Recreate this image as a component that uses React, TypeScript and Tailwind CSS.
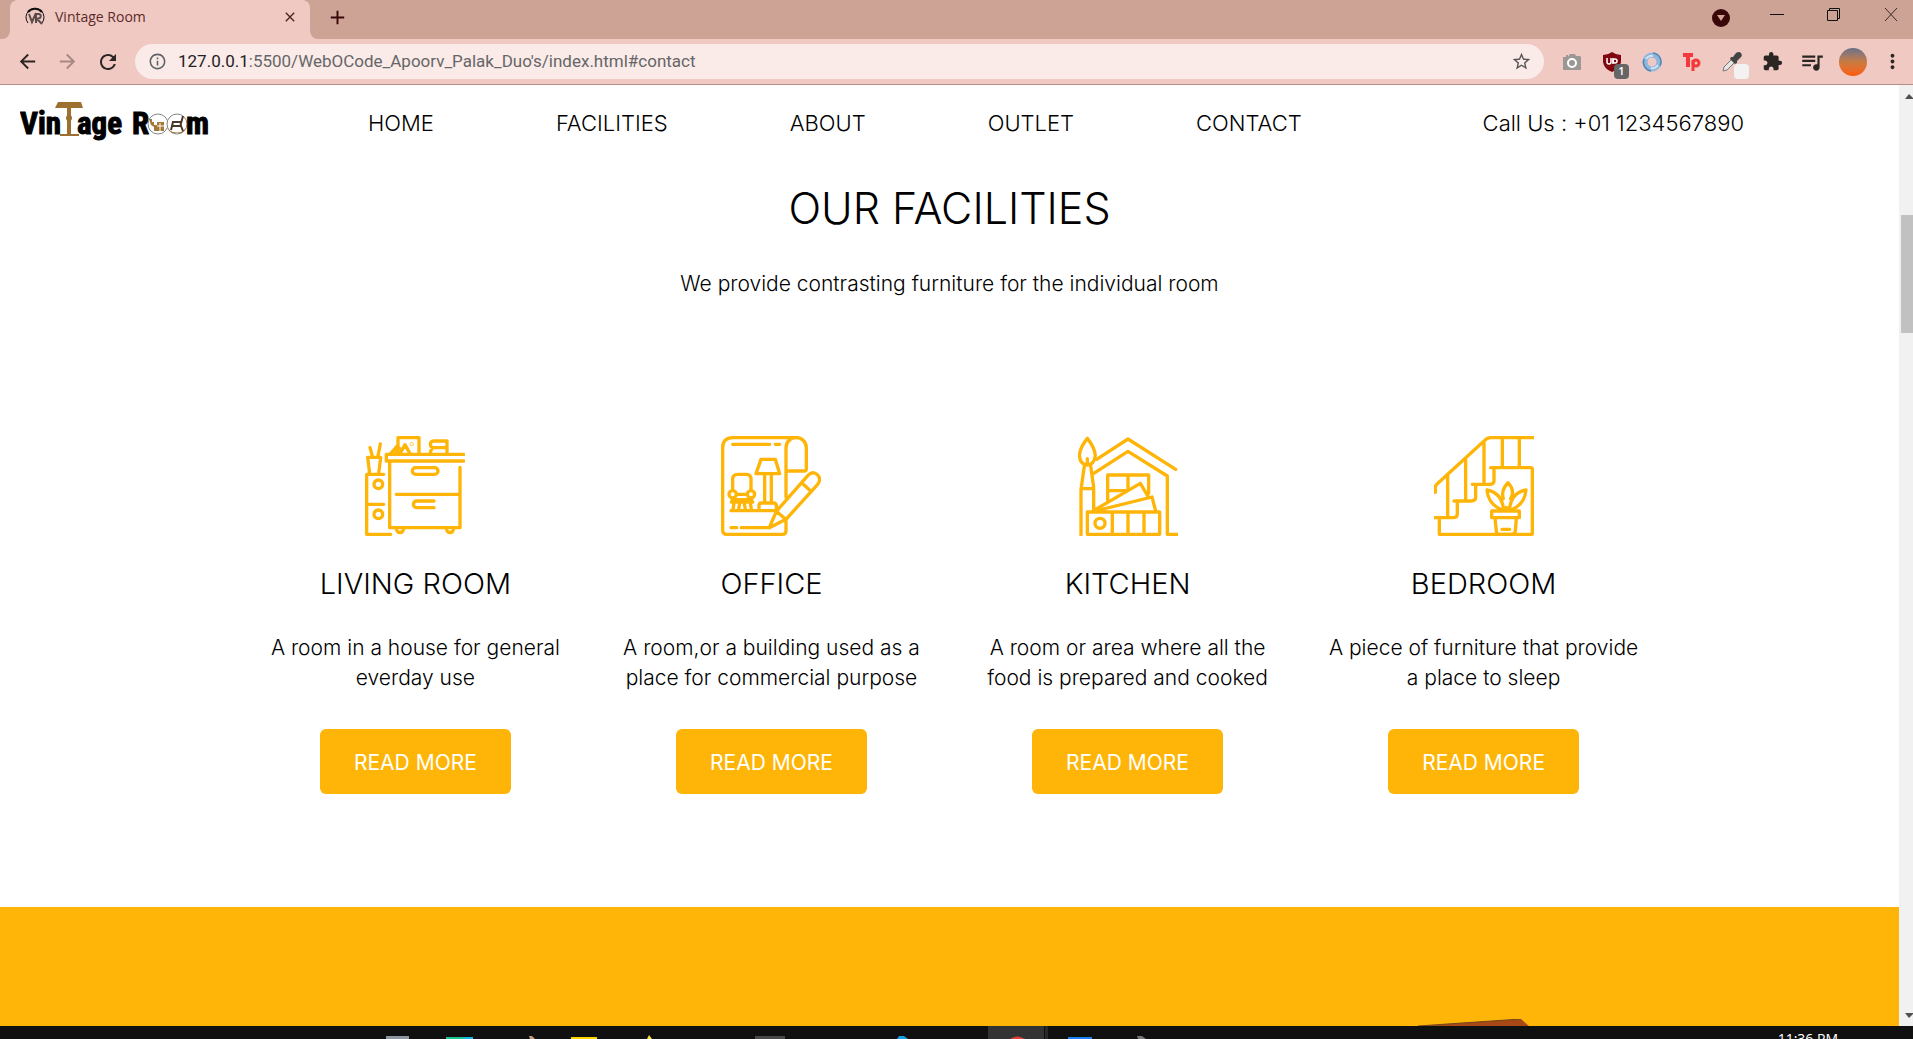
import React from 'react';
import {
  MdArrowBack,
  MdArrowForward,
  MdRefresh,
  MdInfoOutline,
  MdStarBorder,
  MdExtension,
  MdQueueMusic,
  MdMoreVert,
  MdClose,
  MdAdd,
} from 'react-icons/md';

const stroke = {
  fill: 'none',
  stroke: '#ffb508',
  strokeWidth: 10,
  strokeLinecap: 'round' as const,
  strokeLinejoin: 'round' as const,
};

function LivingIcon() {
  return (
    <svg viewBox="45 48 300 300" className="size-[100px]" aria-hidden="true" {...stroke}>
      <path d="M122 343H50V163H101M50 253H101M59 161L53 112H92L86 161M67 108L60 83M84 108L91 72" />
      <circle cx="85" cy="193" r="13" />
      <circle cx="85" cy="283" r="13" />
      <path d="M341 103H109V123H341M119 126V323H330V142M139 223H328" />
      <path d="M197 143H254A10 10 0 0 1 254 163H197A10 10 0 0 1 197 143M252 243H200A10 10 0 0 0 200 263H252" />
      <path d="M139 325A11 13 0 1 0 161 325M289 325A11 13 0 1 0 311 325" />
      <path d="M144 101V53H207V101M144 75L122 101M150 101L165 74L180 101M136 101L148 84" />
      <circle cx="185" cy="73" r="1" />
      <path d="M291 63H250A9 10 0 0 0 250 83H291M291 63V101M250 83Q241 88 241 101" />
    </svg>
  );
}

function OfficeIcon() {
  return (
    <svg viewBox="48 48 300 300" className="size-[100px]" aria-hidden="true" {...stroke}>
      <path d="M274 53H82Q53 55 53 83V330Q53 343 66 343H232Q243 343 243 332V302M243 232V83A30 30 0 0 1 304 83V146Q304 153 297 153H245" />
      <path d="M83 73H194M211 73H224M78 323H95M109 323H190" />
      <path d="M168 118H211L224 161H153ZM179 165V246M199 165V246M162 269V257Q162 249 170 249H206Q214 249 214 258V269M78 272H212" />
      <path d="M83 211V178Q83 163 98 163H124Q138 163 138 178V211M97 223H124M83 239H139L143 246H79ZM87 250L84 268M104 250L101 268M118 250L121 268M136 250L139 268" />
      <circle cx="83" cy="223" r="11" />
      <circle cx="138" cy="223" r="11" />
      <path d="M193 323L214 274L309 166Q323 151 337 164Q350 177 338 193L243 298ZM214 274L242 298M290 188L317 213" />
    </svg>
  );
}

function KitchenIcon() {
  return (
    <svg viewBox="48 48 300 300" className="size-[100px]" aria-hidden="true" {...stroke}>
      <path d="M76 55Q98 82 100 107Q97 134 76 135Q55 134 52 107Q54 82 76 55ZM76 116V134M67 138L58 202M86 138L95 202M57 345V206H95V268" />
      <path d="M104 118L198 57L341 148M94 161L198 94L316 168V343H346" />
      <path d="M137 244V165H260V220M198 165V208M137 212H190" />
      <path d="M76 276H293V343H76ZM151 276V343M198 276V343M246 276V343M93 273L235 190L258 229M99 273L270 231L281 273" />
      <circle cx="114" cy="310" r="15" />
    </svg>
  );
}

function BedroomIcon() {
  return (
    <svg viewBox="48 48 300 300" className="size-[100px]" aria-hidden="true" {...stroke}>
      <path d="M52 217V202Q52 196 58 191L199 62Q208 53 217 53H346M89 166V291M143 118V242M198 66V191M253 55V141M304 55V141" />
      <path d="M218 143H338Q343 143 343 148V343H64V293M50 293H106Q118 293 118 282V243H160Q173 243 173 232V193H215Q228 193 228 182V146M108 243H118M163 193H173" />
      <path d="M221 273H304V293H221ZM231 295L235 333Q236 343 244 343H282Q291 343 292 333L295 295M252 328H275" />
      <path d="M257 270Q252 218 207 210Q210 252 252 270M274 270Q279 218 324 210Q321 252 279 270M256 236Q248 212 270 188Q292 212 278 236M265 270V262" />
    </svg>
  );
}

function Logo() {
  const word = "fill-black stroke-black font-bold text-[31px] font-['Liberation_Sans_Narrow','Roboto_Condensed','DejaVu_Sans_Condensed',sans-serif]";
  return (
    <svg viewBox="0 0 190 44" className="h-11 w-[190px]" role="img" aria-label="Vintage Room">
      <text x="0" y="33" className={word}>Vin</text>
      <g fill="#9b7030">
        <path d="M38 1H61L63 7H35ZM47 7H51V34H47ZM40 33H59V35H40Z" />
        <circle cx="49" cy="17" r="3" />
      </g>
      <text x="57" y="33" className={word}>age</text>
      <text x="112" y="33" className={word}>R</text>
      <g fill="#fff" stroke="#858585" strokeWidth="1">
        <circle cx="138" cy="23" r="10" />
        <circle cx="157" cy="23" r="10" />
      </g>
      <path d="M129 18H132V21H134V24H137V21H144V30H134V26L131 24ZM147 28Q157 35 166 28L162 32H152Z" fill="#a37735" />
      <path d="M137 25H144M140 22V30" stroke="#fff" strokeWidth="1" />
      <path d="M152 21H161M152 25H162M163 15L160 26M153 21L151 29M161 25L163 30" stroke="#493829" strokeWidth="2" fill="none" />
      <text x="166" y="33" className={word}>m</text>
    </svg>
  );
}

const links = ['HOME', 'FACILITIES', 'ABOUT', 'OUTLET', 'CONTACT'];

const facilities = [
  { title: 'LIVING ROOM', lines: ['A room in a house for general', 'everday use'], Icon: LivingIcon },
  { title: 'OFFICE', lines: ['A room,or a building used as a', 'place for commercial purpose'], Icon: OfficeIcon },
  { title: 'KITCHEN', lines: ['A room or area where all the', 'food is prepared and cooked'], Icon: KitchenIcon },
  { title: 'BEDROOM', lines: ['A piece of furniture that provide', 'a place to sleep'], Icon: BedroomIcon },
];

function TabStrip() {
  return (
    <header className="flex h-[39px] shrink-0 bg-[#cda396]">
      <div className="w-2.5 bg-[#efc9c2]">
        <div className="h-full rounded-br-lg bg-[#cda396]" />
      </div>
      <div className="flex w-[300px] items-center rounded-t-lg bg-[#efc9c2] pr-3 pb-1.5 pl-[15px]">
        <svg viewBox="0 0 20 20" className="size-5" fill="none" stroke="#5a4a4a" aria-hidden="true">
          <path d="M3 16A9 9 0 1 1 17 16" stroke="#111" strokeWidth="1" />
          <path d="M3 5A9 9 0 0 1 17 5" stroke="#111" strokeWidth="2" />
          <path d="M4 7L7 15L11 6M11 16V7H14Q17 8 15 11L12 12L17 17" strokeWidth="2" />
        </svg>
        <span className="ml-2.5 flex-1 font-['Open_Sans',sans-serif] text-sm text-[#5c2b2b]">Vintage Room</span>
        <button type="button" aria-label="Close tab" className="text-[#4a2320]">
          <MdClose size={16} />
        </button>
      </div>
      <div className="flex-1 bg-[#efc9c2]">
        <div className="flex h-full items-start rounded-bl-lg bg-[#cda396]">
          <button type="button" aria-label="New tab" className="mt-1.5 ml-4 text-[#3a0708]">
            <MdAdd size={23} />
          </button>
          <div className="ml-auto flex items-start">
            <button type="button" aria-label="Search tabs" className="mt-[9px] mr-10">
              <svg viewBox="0 0 18 18" className="size-[18px]" aria-hidden="true">
                <circle cx="9" cy="9" r="9" fill="#3a0708" />
                <path d="M5 6H13L9 12Z" fill="#cda396" />
              </svg>
            </button>
            <button type="button" aria-label="Minimize" className="mt-2 mr-[42px]">
              <svg viewBox="0 0 14 14" className="size-3.5" stroke="#111" aria-hidden="true">
                <path d="M0 6.500H14" />
              </svg>
            </button>
            <button type="button" aria-label="Restore" className="mt-2 mr-[44px]">
              <svg viewBox="0 0 14 14" className="size-3.5" fill="none" stroke="#111" aria-hidden="true">
                <path d="M1.500 2.500H11.500V12.500H1.500ZM3.500 2.500V0.500H13.500V10.500H11.500" />
              </svg>
            </button>
            <button type="button" aria-label="Close" className="mt-2 mr-[15px]">
              <svg viewBox="0 0 14 14" className="size-3.5" stroke="#3b2a28" aria-hidden="true">
                <path d="M1 0L13 13M13 0L1 13" />
              </svg>
            </button>
          </div>
        </div>
      </div>
    </header>
  );
}

function Extensions() {
  return (
    <div className="flex items-center">
      <button type="button" aria-label="Screenshot" className="ml-[18px]">
        <svg viewBox="0 0 20 18" className="h-[18px] w-5" aria-hidden="true">
          <path d="M1 4H4V2H6V4L8 1H13L14 3H18Q19 3 19 5V16Q19 17 18 17H2Q1 17 1 16Z" fill="#9b9795" />
          <circle cx="10" cy="10" r="4" fill="none" stroke="#fff" strokeWidth="2" />
        </svg>
      </button>
      <button type="button" aria-label="Content blocker, 1 blocked" className="relative ml-[21px]">
        <svg viewBox="0 0 18 20" className="h-5 w-[18px]" aria-hidden="true">
          <path d="M9 0Q13 3 18 3V10Q17 17 9 20Q1 17 0 10V3Q5 3 9 0Z" fill="#800610" />
          <path d="M4 6V10Q4 12 6 12Q8 12 8 10V6M10 6V12" stroke="#fff" strokeWidth="1.500" fill="none" />
          <circle cx="12" cy="9" r="2" stroke="#fff" strokeWidth="1.500" fill="none" />
        </svg>
        <span className="absolute top-3 left-[11px] flex h-[15px] w-[15px] items-center justify-center rounded-sm bg-[#666] font-['Open_Sans',sans-serif] text-[11px] font-semibold text-white">1</span>
      </button>
      <button type="button" aria-label="Sync" className="ml-[21px]">
        <svg viewBox="0 0 20 20" className="size-5" fill="none" aria-hidden="true">
          <circle cx="10" cy="10" r="7" stroke="#8fb6dd" strokeWidth="5" />
          <path d="M11 1A9 9 0 0 1 18 14M9 19A9 9 0 0 1 2 7" stroke="#5585b8" strokeWidth="1.500" />
          <path d="M4 7Q7 3 11 4M16 13Q13 17 9 16" stroke="#cfe2f4" strokeWidth="2" />
        </svg>
      </button>
      <button type="button" aria-label="Tp" className="ml-5">
        <svg viewBox="0 0 20 20" className="size-5" fill="none" stroke="#f3393d" aria-hidden="true">
          <path d="M1 3H11M6 3V15" strokeWidth="4" />
          <path d="M11 8V19" strokeWidth="3" />
          <circle cx="14" cy="11" r="3" strokeWidth="3" />
        </svg>
      </button>
      <button type="button" aria-label="Colour picker" className="relative ml-5">
        <svg viewBox="0 0 20 20" className="size-5" aria-hidden="true">
          <path d="M1 19L2 15L10 7L13 10L5 18Z" fill="#e5e5e5" stroke="#777" strokeWidth="1" />
          <path d="M9 5L11 5L14 1Q17 -1 19 1Q21 4 18 6L15 9L15 11L13 12L8 7Z" fill="#444" />
        </svg>
        <span className="absolute top-3 left-3 size-[15px] rounded-sm bg-[#f3f1f1]" />
      </button>
      <button type="button" aria-label="Extensions" className="ml-5 text-[#2b2624]">
        <MdExtension size={21} />
      </button>
      <button type="button" aria-label="Media controls" className="ml-4 text-[#2b2624]">
        <MdQueueMusic size={26} />
      </button>
      <button type="button" aria-label="Profile" className="ml-3.5 size-7 rounded-full bg-linear-to-b from-[#667088] via-[#c97a3f] to-[#ff5a00]" />
      <button type="button" aria-label="Menu" className="mr-[9px] ml-3.5 text-[#2b2624]">
        <MdMoreVert size={23} />
      </button>
    </div>
  );
}

function Toolbar() {
  return (
    <div className="flex h-[46px] shrink-0 items-center border-b border-[#b48c88] bg-[#efc9c2] text-[#2b2624]">
      <button type="button" aria-label="Back" className="ml-4"><MdArrowBack size={23} /></button>
      <button type="button" aria-label="Forward" className="ml-[17px] text-[#a58783]"><MdArrowForward size={23} /></button>
      <button type="button" aria-label="Reload" className="ml-[17px]"><MdRefresh size={24} /></button>
      <div className="ml-[15px] flex h-[35px] flex-1 items-center rounded-full bg-[#faebe9] pr-3 pl-[13px]">
        <MdInfoOutline size={19} className="text-[#5f6368]" />
        <label className="ml-[11px] flex flex-1 items-center font-['Roboto',sans-serif] text-[17px] text-[#666]">
          <span className="text-[#222]">127.0.0.1</span>
          <input
            type="text"
            aria-label="Address"
            defaultValue=":5500/WebOCode_Apoorv_Palak_Duo's/index.html#contact"
            className="min-w-0 flex-1 bg-transparent outline-none"
          />
        </label>
        <button type="button" aria-label="Bookmark" className="text-[#555]"><MdStarBorder size={21} /></button>
      </div>
      <Extensions />
    </div>
  );
}

function Page() {
  return (
    <main className="min-w-0 flex-1 overflow-hidden bg-white font-['Inter',sans-serif] text-black">
      <nav className="flex h-[76px] items-center pl-5 text-[22px] font-light">
        <a href="#home"><Logo /></a>
        <ul className="ml-[158px] flex gap-[122px]">
          {links.map((l) => (
            <li key={l}><a href={'#' + l.toLowerCase()}>{l}</a></li>
          ))}
        </ul>
        <span className="ml-auto pr-[155px]">Call Us : +01 1234567890</span>
      </nav>
      <section id="facilities" className="pt-5 pb-[113px] text-center">
        <h1 className="text-[43px] leading-[54px] font-light">OUR FACILITIES</h1>
        <p className="mt-[34px] text-[21px] leading-[30px] font-light">We provide contrasting furniture for the individual room</p>
        <div className="mx-auto mt-[137px] grid w-3/4 grid-cols-4">
          {facilities.map(({ title, lines, Icon }) => (
            <article key={title} className="flex flex-col items-center">
              <Icon />
              <h2 className="mt-[29px] text-[29px] leading-[38px] font-light">{title}</h2>
              <p className="mt-[30px] text-[21px] leading-[30px] font-light whitespace-nowrap">
                {lines[0]}<br />{lines[1]}
              </p>
              <button type="button" className="mt-9 h-[65px] w-[191px] rounded-md bg-[#ffb508] pt-0.5 text-[21px] text-white">READ MORE</button>
            </article>
          ))}
        </div>
      </section>
      <section className="flex h-[400px] justify-end bg-[#ffb508] pt-[112px] pr-[369px]">
        <svg viewBox="0 0 112 16" className="h-4 w-28" aria-hidden="true">
          <path d="M0 7L103 0L121 16H0Z" fill="#a94816" />
          <path d="M0 7L103 0" stroke="#71451e" strokeWidth="1" />
        </svg>
      </section>
    </main>
  );
}

function ScrollBar() {
  return (
    <div className="flex w-3.5 shrink-0 flex-col overflow-hidden bg-[#f1f1f1]">
      <svg viewBox="0 0 14 17" className="h-[17px] w-3.5 shrink-0" fill="#505050" aria-hidden="true"><path d="M6 14L10 9L15 14Z" /></svg>
      <div className="mt-[113px] ml-0.5 h-[118px] bg-[#c1c1c1]" />
      <svg viewBox="0 0 14 17" className="mt-auto h-[17px] w-3.5 shrink-0" fill="#505050" aria-hidden="true"><path d="M6 4L10 9L15 4Z" /></svg>
    </div>
  );
}

function TaskBar() {
  return (
    <footer className="relative flex h-[13px] shrink-0 overflow-hidden bg-[#101010]">
      <svg viewBox="0 0 1200 13" className="h-[13px] w-[1200px] shrink-0" aria-hidden="true">
        <path d="M988 0H1044V13H988Z" fill="#333" />
        <path d="M1045 0H1048V13H1045Z" fill="#292929" />
        <path d="M386 10H409V13H386Z" fill="#8d95a0" />
        <path d="M446 11H463V13H446Z" fill="#19c58c" />
        <path d="M463 11H473V13H463Z" fill="#17b8dc" />
        <path d="M529 10H532L535 13H530Z" fill="#c99a7a" />
        <path d="M571 11H597V13H571Z" fill="#ffd500" />
        <path d="M649 9L652 13H647Z" fill="#f4e534" />
        <path d="M755 10H785V13H755Z" fill="#484848" />
        <path d="M899 10H904L908 13H897Z" fill="#199ee5" />
        <path d="M1010 13Q1017 8 1025 13Z" fill="#e34133" />
        <path d="M1068 11H1092V13H1068Z" fill="#1683f1" />
        <path d="M1137 10H1142L1146 13H1138Z" fill="#777" />
      </svg>
      <time className="mt-[5px] mr-[75px] ml-auto font-['Open_Sans',sans-serif] text-sm leading-4 text-white">11:36 PM</time>
    </footer>
  );
}

export default function App() {
  return (
    <div className="flex h-screen flex-col overflow-hidden">
      <TabStrip />
      <Toolbar />
      <div className="flex min-h-0 flex-1">
        <Page />
        <ScrollBar />
      </div>
      <TaskBar />
    </div>
  );
}
